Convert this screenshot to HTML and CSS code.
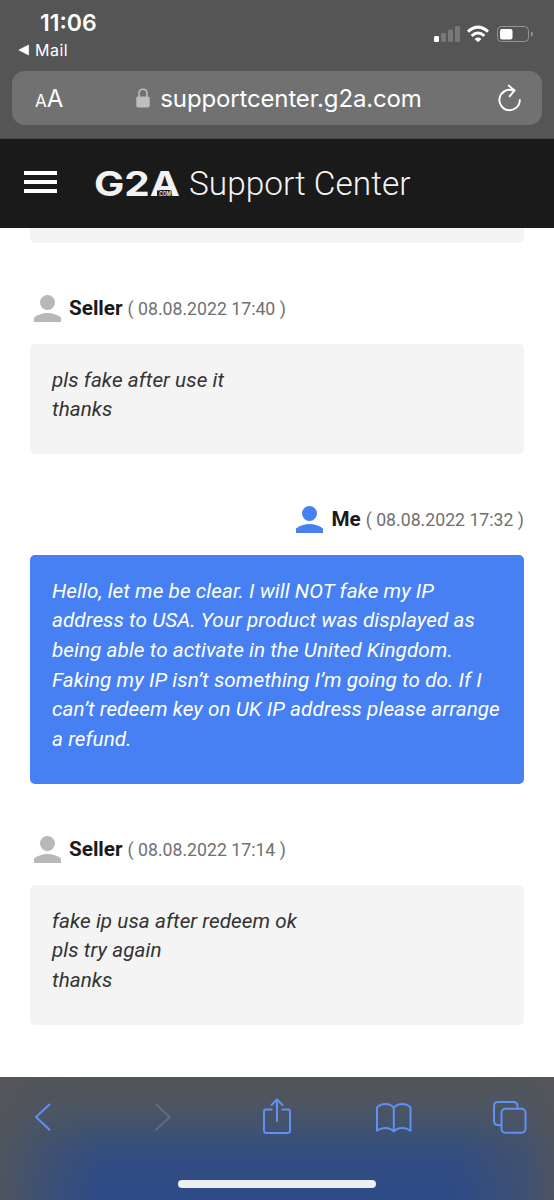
FILE: index.html
```
<!DOCTYPE html>
<html lang="en">
<head>
<meta charset="utf-8">
<title>G2A Support Center</title>
<link rel="stylesheet" href="styles.css">
</head>
<body>
<div class="phone">
  <div class="browser-top">
    <div class="status">
      <div class="status-left">
        <div class="clock">11:06</div>
        <div class="back-app">
          <svg width="12" height="12" viewBox="0 0 12 12"><path d="M.8 6 L10.6 1 V11 Z" fill="#fff" stroke="#fff" stroke-width=".6" stroke-linejoin="round"/></svg>
          <span>Mail</span>
        </div>
      </div>
      <svg class="status-icons" width="100" height="20" viewBox="433 24 100 20">
        <rect x="434" y="36" width="5" height="6" rx="1.2" fill="#fff"/>
        <g fill="#787878"><rect x="441" y="33" width="5" height="9" rx="1.2"/><rect x="448" y="29.500" width="5" height="12.500" rx="1.2"/><rect x="455" y="26" width="5" height="16" rx="1.200"/></g>
        <g fill="none" stroke="#fff" stroke-width="3"><path d="M468 31.700 Q478 22.500 488 31.700"/><path d="M471.700 35.900 Q478 30.200 484.300 35.900"/></g>
        <path d="M474.600 38.900 Q478 36 481.400 38.900 L478 42.200 Z" fill="#fff"/>
        <rect x="497.500" y="26.500" width="31" height="15" rx="4" fill="none" stroke="#959595"/>
        <rect x="500" y="29" width="12.500" height="10.500" rx="2" fill="#fff"/>
        <path d="M531 31.500 Q533 32 533 34 Q533 36 531 36.500 Z" fill="#959595"/>
      </svg>
    </div>
    <div class="address">
      <div class="text-size"><span class="small-a">A</span><span class="big-a">A</span></div>
      <div class="host">
        <svg width="14" height="20" viewBox="0 0 14 20"><path d="M3 10 V5.700 Q3 1.200 7 1.200 Q11 1.200 11 5.700 V10" fill="none" stroke="#bdbcc1" stroke-width="1.600"/><rect x=".3" y="8.500" width="13.400" height="11" rx="1.700" fill="#bdbcc1"/></svg>
        <span>supportcenter.g2a.com</span>
      </div>
      <svg class="reload" width="24" height="28" viewBox="498 83 24 28" fill="none" stroke="#fff" stroke-width="1.900" stroke-linecap="round" stroke-linejoin="round"><path d="M519.800 99 A10.200 10.200 0 1 1 513 89.400 L514.400 89.400"/><path d="M508.800 84.600 L514.500 89.500 L509.600 95.300"/></svg>
    </div>
  </div>

  <header class="site-header">
    <div class="menu"><i></i><i></i><i></i></div>
    <svg class="logo" width="88" height="32" viewBox="0 0 88 32">
      <text class="logo-name" x="0" y="27.500" textLength="86" lengthAdjust="spacingAndGlyphs">G2A</text>
      <rect x="63" y="22.500" width="14.500" height="5.500" fill="#1a1a1a"/>
      <text class="logo-com" x="64" y="27.500" textLength="13" lengthAdjust="spacingAndGlyphs">.COM</text>
    </svg>
    <div class="site-title">Support Center</div>
  </header>

  <main class="thread">
    <div class="message-end"></div>
    <section>
      <div class="author">
        <svg class="avatar" width="27" height="27" viewBox="0 0 27 27"><circle cx="13.500" cy="7.500" r="7.500"/><path d="M0 27 V22.500 Q6 18 13.500 18 Q21 18 27 22.500 V27 Z"/></svg>
        <b class="name">Seller</b><span class="date">( 08.08.2022 17:40 )</span>
      </div>
      <div class="message">pls fake after use it<br>thanks</div>
    </section>
    <section class="mine">
      <div class="author">
        <svg class="avatar" width="27" height="27" viewBox="0 0 27 27"><circle cx="13.500" cy="7.500" r="7.500"/><path d="M0 27 V22.500 Q6 18 13.500 18 Q21 18 27 22.500 V27 Z"/></svg>
        <b class="name">Me</b><span class="date">( 08.08.2022 17:32 )</span>
      </div>
      <div class="message">Hello, let me be clear. I will NOT fake my IP<br>address to USA. Your product was displayed as<br>being able to activate in the United Kingdom.<br>Faking my IP isn’t something I’m going to do. If I<br>can’t redeem key on UK IP address please arrange<br>a refund.</div>
    </section>
    <section>
      <div class="author">
        <svg class="avatar" width="27" height="27" viewBox="0 0 27 27"><circle cx="13.500" cy="7.500" r="7.500"/><path d="M0 27 V22.500 Q6 18 13.500 18 Q21 18 27 22.500 V27 Z"/></svg>
        <b class="name">Seller</b><span class="date">( 08.08.2022 17:14 )</span>
      </div>
      <div class="message">fake ip usa after redeem ok<br>pls try again<br>thanks</div>
    </section>
  </main>

  <nav class="toolbar">
    <div class="tools">
      <svg width="38" height="38" viewBox="24 1098 38 38"><path d="M49.500 1104.500 L36 1117 L49.500 1129.700"/></svg>
      <svg class="disabled" width="38" height="38" viewBox="140.500 1098 38 38"><path d="M155.700 1104.500 L169.200 1117 L155.700 1129.700"/></svg>
      <svg width="38" height="38" viewBox="257 1098 38 38"><path d="M271.500 1109.500 H266 Q264 1109.500 264 1111.500 V1130.500 Q264 1133 266.500 1133 H287.500 Q290 1133 290 1130.500 V1111.500 Q290 1109.500 288 1109.500 H282.500 M277 1121 V1100 M271.500 1105 L277 1099.500 L282.500 1105"/></svg>
      <svg width="38" height="38" viewBox="373.500 1098 38 38"><path d="M393.300 1107.500 Q390 1104 385 1104 Q379.500 1104 376.500 1107.500 V1130.700 Q380 1128 385 1128 Q390 1128 393.300 1131.500 Q396.500 1128 401.500 1128 Q406.500 1128 410 1130.700 V1107.500 Q407 1104 401.500 1104 Q396.500 1104 393.300 1107.500 V1131.500"/></svg>
      <svg width="38" height="38" viewBox="490 1098 38 38"><path d="M500.500 1125 H498 Q494 1125 494 1121 V1106 Q494 1102 498 1102 H513 Q517.500 1102 517.500 1106 V1108.500"/><rect x="501.500" y="1108.700" width="24" height="24" rx="4"/></svg>
    </div>
    <div class="home-bar"></div>
  </nav>
</div>
</body>
</html>
```
FILE: styles.css
```
* { box-sizing: border-box; }
body { margin: 0; background: #fff; font-family: Roboto, sans-serif; }
svg { display: block; flex: none; }
.phone { width: 554px; height: 1200px; display: flex; flex-direction: column; overflow: hidden; }

.browser-top { height: 139px; flex: none; background: #555; border-bottom: 1px solid #484848; padding: 0 12px; font-family: Inter, sans-serif; color: #fff; }
.status { height: 71px; display: flex; justify-content: space-between; }
.status-left { padding: 10px 0 0 6px; }
.clock { font-size: 23px; line-height: 27px; font-weight: 600; padding-left: 22px; letter-spacing: 0; }
.back-app { display: flex; align-items: center; gap: 5px; font-size: 16px; line-height: 20px; padding-top: 3px; letter-spacing: .5px; font-weight: 400; }
.status-icons { margin: 24px 9px 0 0; }
.address { height: 54px; border-radius: 13px; background: #717171; display: flex; align-items: center; justify-content: space-between; padding: 0 20px 0 23px; }
.text-size { display: flex; align-items: baseline; width: 30px; padding-top: 3px; }
.small-a { font-size: 17px; line-height: 26px; }
.big-a { font-size: 24px; line-height: 26px; }
.host { display: flex; align-items: center; gap: 10px; font-size: 24px; letter-spacing: -.15px; margin-right: 5px; }

.site-header { height: 89px; flex: none; background: #1a1a1a; display: flex; align-items: center; padding: 0 24px; color: #f4f4f4; }
.menu { width: 33px; display: grid; gap: 5px; margin-right: 37px; margin-top: -4px; }
.menu i { height: 4px; background: #fff; }
.logo { margin-right: 7px; overflow: visible; }
.logo-name { font: 700 34px Inter, sans-serif; fill: #f2f2f2; }
.logo-com { font: 600 5.500px Inter, sans-serif; fill: #f2f2f2; }
.site-title { font-size: 33.400px; font-weight: 300; white-space: nowrap; }

.thread { flex: 1; min-height: 0; padding: 0 30px; overflow: hidden; }
.message-end { height: 15px; background: #f4f4f4; border-radius: 0 0 5px 5px; }
.author { height: 101px; padding: 52px 0 0 4px; display: flex; align-items: flex-start; line-height: 26px; white-space: nowrap; }
.avatar { fill: #b8b8b8; margin-right: 8px; }
.name { font-size: 20.680px; color: #1a1a1a; margin-right: 5px; font-weight: 700; }
.date { font-size: 17.700px; color: #707070; padding-top: 1px; }
.message { background: #f4f4f4; border-radius: 5px; color: #333; padding: 21.500px 20px 29.700px 22px; font-size: 20.680px; font-style: italic; line-height: 29.600px; white-space: nowrap; letter-spacing: .07px; }
.mine .author { justify-content: flex-end; }
.mine .avatar { fill: #4680f2; }
.mine .message { background: #4680f2; color: #fff; }

.toolbar { height: 123px; flex: none; padding: 20px 26px 0 24px; display: flex; flex-direction: column; justify-content: space-between; background: linear-gradient(90deg, rgba(84,86,88,.85) 0%, rgba(80,86,94,.5) 7%, rgba(80,86,94,0) 18%, rgba(80,86,94,0) 82%, rgba(80,86,94,.5) 95%, rgba(84,86,88,.8) 100%), linear-gradient(180deg, #545556 0%, #4d5561 22%, #43536c 38%, #3a5076 50%, #324d81 65%, #2d4b88 100%); }
.tools { height: 39px; display: flex; align-items: center; justify-content: space-between; }
.tools svg { fill: none; stroke: #6090f5; stroke-width: 2; stroke-linecap: round; stroke-linejoin: round; }
.tools .disabled { stroke: #606d80; }
.home-bar { width: 198px; height: 8px; border-radius: 4px; background: #eee; margin: 0 0 12px 154px; }
```
